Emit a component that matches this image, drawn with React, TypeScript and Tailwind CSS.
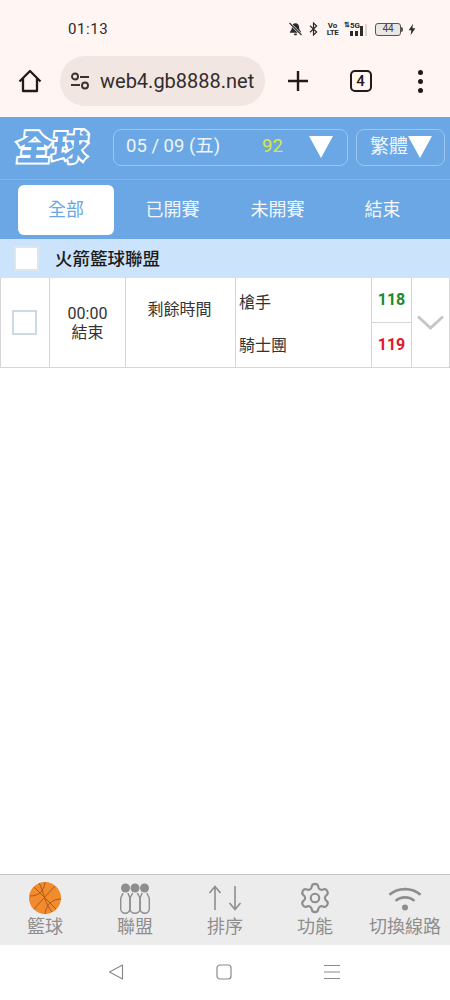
import { Settings } from "lucide-react";

const cjk = "font-['Roboto','Noto_Sans_CJK_TC',sans-serif]";

const tabs = ["全部", "已開賽", "未開賽", "結束"];

function StatusIcons() {
  return (
    <div className="flex items-center text-[#2b2b2b]">
      {/* muted bell */}
      <svg width="15" height="14" viewBox="0 0 15 14" className="mr-[6px]">
        <path d="M7.5 1.2c2.4 0 3.6 1.8 3.6 3.9 0 2.2.7 3.6 2 4.8v.8H1.9v-.8c1.3-1.2 2-2.6 2-4.8 0-2.1 1.2-3.9 3.6-3.9z" fill="currentColor" />
        <rect x="6" y="11.4" width="3" height="1.8" rx=".9" fill="currentColor" />
        <path d="M1.5 1l12 12" stroke="#fff5f2" strokeWidth="2.4" />
        <path d="M1.5 1l12 12" stroke="currentColor" strokeWidth="1.1" />
      </svg>
      {/* bluetooth */}
      <svg width="9" height="14" viewBox="0 0 9 14" className="mr-[9px]">
        <path d="M1 3.8l6.6 6.2-3.1 3V1l3.1 3L1 10.2" fill="none" stroke="currentColor" strokeWidth="1.2" />
      </svg>
      <div className="mr-[6px] flex w-[11px] flex-col items-center text-[8px] leading-[7px] font-bold font-['Roboto',sans-serif]">
        <span>Vo</span>
        <span className="tracking-[-0.5px]">LTE</span>
      </div>
      {/* 5G signal */}
      <div className="relative mr-[7px] h-[14px] w-[24px]">
        <span className="absolute top-[-1px] left-0 text-[7px] leading-[9px] font-bold font-['Roboto',sans-serif]">⇅</span>
        <span className="absolute top-[-1px] left-[6px] text-[8px] leading-[9px] font-bold font-['Roboto',sans-serif]">5G</span>
        <span className="absolute bottom-0 left-[6px] h-[5px] w-[3px] bg-[#2b2b2b]" />
        <span className="absolute bottom-0 left-[11px] h-[5px] w-[3px] bg-[#2b2b2b]" />
        <span className="absolute bottom-0 left-[16px] h-[10px] w-[3px] bg-[#2b2b2b]" />
        <span className="absolute right-[1px] bottom-0 h-[12px] w-[2px] bg-[#d9d4d2]" />
      </div>
      {/* battery */}
      <div className="flex h-[13px] w-[26px] items-center justify-center rounded-[3px] border border-[#555] bg-[#e9e6e5] text-[10px] leading-none text-[#444] font-['Roboto',sans-serif]">
        44
      </div>
      <div className="mr-[5px] h-[5px] w-[2px] rounded-r-sm bg-[#555]" />
      <svg width="8" height="13" viewBox="0 0 9 13">
        <path d="M5.6 0L.8 7.4h3L3 13l5.2-8H5z" fill="currentColor" />
      </svg>
    </div>
  );
}

function BrowserBar() {
  return (
    <div className="flex h-[117px] flex-col bg-[#fff5f2]">
      <div className="flex h-[55px] items-center justify-between pt-[3px] pr-[34px] pl-[68px]">
        <span className="text-[15px] tracking-[0.6px] text-[#2b2b2b] font-['Roboto',sans-serif]">01:13</span>
        <StatusIcons />
      </div>
      <div className="flex h-[52px] items-center">
        <div className="flex w-[60px] justify-center">
          <svg width="24" height="24" viewBox="0 0 24 24" fill="none" stroke="#211a18" strokeWidth="2.3" strokeLinejoin="round">
            <path d="M1.5 12.5L12 2l10.5 10.5M5 9.5V22h14V9.5" />
          </svg>
        </div>
        <div className="flex h-[50px] w-[205px] items-center rounded-full bg-[#f1e6e2] pl-[10px]">
          <svg width="20" height="18" viewBox="0 0 20 18" fill="none" stroke="#3a3230" strokeWidth="1.9">
            <circle cx="5" cy="4.5" r="3" />
            <path d="M10 5h9M1 13h9" />
            <circle cx="15" cy="13.5" r="3" />
          </svg>
          <span className="ml-[10px] text-[20px] text-[#332d2b] font-['Roboto',sans-serif]">web4.gb8888.net</span>
        </div>
        <div className="flex w-[65px] justify-center">
          <svg width="22" height="22" viewBox="0 0 22 22" stroke="#211a18" strokeWidth="2.4">
            <path d="M1 11h20M11 1v20" />
          </svg>
        </div>
        <div className="flex w-[60px] justify-center pl-[1px]">
          <div className="flex h-[22px] w-[22px] items-center justify-center rounded-[5px] border-2 border-[#211a18] text-[15px] font-medium text-[#211a18] font-['Roboto',sans-serif]">
            4
          </div>
        </div>
        <div className="flex w-[60px] flex-col items-center gap-[4px]">
          <span className="h-[5px] w-[5px] rounded-full bg-[#211a18]" />
          <span className="h-[5px] w-[5px] rounded-full bg-[#211a18]" />
          <span className="h-[5px] w-[5px] rounded-full bg-[#211a18]" />
        </div>
      </div>
    </div>
  );
}

function Triangle({ className }: { className: string }) {
  return (
    <svg viewBox="0 0 24 22" preserveAspectRatio="none" className={className}>
      <path d="M0 0h24L12 22z" fill="#fff" />
    </svg>
  );
}

function Header() {
  return (
    <div className={`bg-[#6aa7e4] ${cjk}`}>
      <div className="flex h-[63px] items-center border-b border-[#82b6ea] pl-[15px]">
        <div className="w-[98px] pb-[2px] pl-[2px]">
          <span className="inline-block -skew-x-6 text-[35px] leading-none font-black tracking-[1px] text-[#6aa7e4] [-webkit-text-stroke:4px_white] [paint-order:stroke_fill] font-['Noto_Sans_CJK_TC',sans-serif]">
            全球
          </span>
        </div>
        <div className="mb-[2px] flex h-[37px] w-[235px] items-center rounded-lg border border-[#9cc5ef] pl-[12px]">
          <span className="w-[136px] text-[18.5px] text-[#eef5fc]">05 / 09 (五)</span>
          <span className="w-[47px] text-[18.5px] text-[#d7ea3c]">92</span>
          <Triangle className="h-[22px] w-[24px]" />
        </div>
        <div className="mb-[2px] ml-[8px] flex h-[37px] w-[89px] items-center rounded-lg border border-[#9cc5ef] pl-[13px]">
          <span className="w-[38px] shrink-0 text-[19px] whitespace-nowrap text-[#eef5fc]">繁體</span>
          <Triangle className="h-[22px] w-[24px] shrink-0" />
        </div>
      </div>
      <div className="flex h-[59px] items-center pl-[18px]">
        {tabs.map((tab, i) => (
          <div
            key={tab}
            className={
              i === 0
                ? "mr-[6px] flex h-[50px] w-[96px] items-center justify-center rounded-md bg-white text-[18px] text-[#6aa7e4]"
                : "flex h-[50px] w-[105px] items-center justify-center text-[18px] text-[#f2f7fd]"
            }
          >
            {tab}
          </div>
        ))}
      </div>
    </div>
  );
}

function Checkbox({ className }: { className: string }) {
  return <div className={`border-2 bg-white ${className}`} />;
}

function GameList() {
  return (
    <div className={`flex-1 bg-white ${cjk}`}>
      <div className="flex h-[39px] items-center bg-[#cbe4fb] pl-[14px]">
        <Checkbox className="h-[25px] w-[25px] border-[#dbe6ef]" />
        <span className="ml-[16px] pt-[1px] text-[17.5px] font-medium text-[#1b1b1b]">火箭籃球聯盟</span>
      </div>
      <div className="flex h-[90px] border-b border-[#d6d6d6] text-[#333]">
        <div className="flex w-[50px] items-center justify-center border-r border-l border-[#d6d6d6] pr-[1px]">
          <Checkbox className="h-[25px] w-[25px] border-[#cbdbe6]" />
        </div>
        <div className="flex w-[76px] flex-col items-center justify-center border-r border-[#d6d6d6] text-[16px] leading-[19px]">
          <span>00:00</span>
          <span>結束</span>
        </div>
        <div className="w-[110px] border-r border-[#d6d6d6] pt-[20px] pr-[2px] text-center text-[16px] leading-[24px]">剩餘時間</div>
        <div className="flex w-[136px] flex-col justify-around border-r border-[#d6d6d6] pt-[3px] pl-[3px] text-[16px]">
          <span>槍手</span>
          <span>騎士團</span>
        </div>
        <div className="flex w-[40px] flex-col border-r border-[#d6d6d6] text-center text-[16px] font-bold">
          <div className="flex h-[45px] items-center justify-center border-b border-[#d6d6d6] text-[#1c8a2a]">118</div>
          <div className="flex flex-1 items-center justify-center text-[#e3172a]">119</div>
        </div>
        <div className="flex flex-1 items-center justify-center border-r border-[#d6d6d6]">
          <svg width="27" height="15" viewBox="0 0 27 15" fill="none" stroke="#c6c6c6" strokeWidth="3">
            <path d="M1 1.500l12.500 11.500L26 1.500" />
          </svg>
        </div>
      </div>
    </div>
  );
}

function BasketballIcon() {
  return (
    <svg width="32" height="32" viewBox="0 0 32 32">
      <circle cx="16" cy="16" r="16" fill="#f28a2e" />
      <g fill="none" stroke="#a85a1c" strokeWidth="1">
        <path d="M5 5l22 22M26 4L5 27" />
        <path d="M1 14c8 0 14-4 15-14M16 32c1-9 7-15 16-15" />
        <path d="M10 1c5 8 5 20 13 29" />
      </g>
    </svg>
  );
}

function LeagueIcon() {
  return (
    <svg width="30" height="31" viewBox="0 0 30 31" fill="none" stroke="#8e8e8e" strokeWidth="1.4">
      <circle cx="5.500" cy="5" r="4.500" fill="#8e8e8e" stroke="none" />
      <circle cx="15" cy="5" r="4.500" fill="#8e8e8e" stroke="none" />
      <circle cx="24.500" cy="5" r="4.500" fill="#8e8e8e" stroke="none" />
      <path d="M3 10c0 2-2.300 3-2.300 6v9.500c0 2.800 2 4.800 4.500 4.800S10 28.300 10 25.500V16c0-3-2-4-2-6" />
      <path d="M12.500 10c0 2-2.500 3-2.500 6v9.500c0 2.800 2.300 4.800 5 4.800s5-2 5-4.800V16c0-3-2.500-4-2.500-6" />
      <path d="M22 10c0 2-2 3-2 6v9.500c0 2.800 2.300 4.800 4.800 4.800s4.500-2 4.500-4.800V16c0-3-2.300-4-2.300-6" />
    </svg>
  );
}

function SortIcon() {
  return (
    <svg width="34" height="26" viewBox="0 0 34 26" fill="none" stroke="#8e8e8e" strokeWidth="1.6">
      <path d="M7 25V2M1.500 8L7 1.500 12.500 8" />
      <path d="M27 1v23M21.500 18L27 24.500 32.500 18" />
    </svg>
  );
}

function WifiIcon() {
  return (
    <svg width="34" height="25" viewBox="0 0 36 26" fill="none" stroke="#8e8e8e" strokeWidth="2.8">
      <path d="M1.500 9C10.500 1 25.500 1 34.500 9" />
      <path d="M8 15.500c5.500-5 14.500-5 20 0" />
      <circle cx="18" cy="22.500" r="3.200" fill="#8e8e8e" stroke="none" />
    </svg>
  );
}

const navItems = [
  { label: "籃球", icon: <BasketballIcon /> },
  { label: "聯盟", icon: <LeagueIcon /> },
  { label: "排序", icon: <SortIcon /> },
  { label: "功能", icon: <Settings size={34} strokeWidth={1.5} className="text-[#8e8e8e]" /> },
  { label: "切換線路", icon: <WifiIcon /> },
];

function BottomNav() {
  return (
    <div className={`flex h-[71px] border-t border-[#c4c4c4] bg-[#ececec] ${cjk}`}>
      {navItems.map((item) => (
        <div key={item.label} className="flex w-[90px] flex-col items-center pt-[7px]">
          <div className="flex h-[32px] items-center justify-center">{item.icon}</div>
          <span className="mt-[1px] text-[18px] leading-[24px] whitespace-nowrap text-[#8e8e8e]">{item.label}</span>
        </div>
      ))}
    </div>
  );
}

function SystemNav() {
  return (
    <div className="flex h-[55px] items-center justify-center gap-[92px] bg-white pr-[2px] pb-[2px]">
      <svg width="16" height="16" viewBox="0 0 16 16" fill="none" stroke="#8a8a8a" strokeWidth="1.2" strokeLinejoin="round">
        <path d="M14.500 1L1.500 8l13 7z" />
      </svg>
      <svg width="16" height="16" viewBox="0 0 16 16" fill="none" stroke="#8a8a8a" strokeWidth="1.2">
        <rect x="1" y="1" width="14" height="14" rx="3" />
      </svg>
      <svg width="16" height="16" viewBox="0 0 16 16" stroke="#8a8a8a" strokeWidth="1.1">
        <path d="M0 1.500h16M0 8h16M0 14.500h16" />
      </svg>
    </div>
  );
}

export default function App() {
  return (
    <div className="flex h-[1000px] w-[450px] flex-col overflow-hidden bg-white">
      <BrowserBar />
      <Header />
      <GameList />
      <BottomNav />
      <SystemNav />
    </div>
  );
}
